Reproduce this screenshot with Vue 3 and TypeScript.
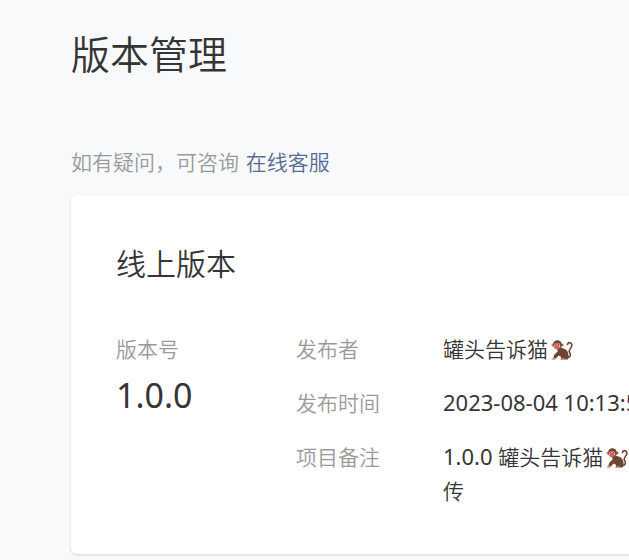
<script setup lang="ts">
import { defineComponent, h } from 'vue'

const MonkeyIcon = defineComponent({
  name: 'MonkeyIcon',
  setup: () => () =>
    h('svg', { viewBox: '0 0 22 22', width: 22, height: 22, role: 'img', 'aria-label': '🐒' }, [
      h('path', {
        d: 'M15.5 18.6C19.5 18.6 20.4 15.6 18.6 13.4C16.8 11.2 20.6 9.6 20.8 6.2C20.8 3.2 17.4 2.8 16.4 5.4',
        fill: 'none', stroke: '#6d4534', 'stroke-width': 1.6, 'stroke-linecap': 'round',
      }),
      h('path', {
        d: 'M6 8.5C10.5 8.2 15.6 9.6 17 13.4C18 16.2 17.6 19 16.6 20.5H9.6L10.2 18L7.6 16.6L4.6 19.8H2L3.4 15.4L6.6 12.4Z',
        fill: '#6d4534',
      }),
      h('circle', { cx: 1.9, cy: 6, r: 1.5, fill: '#c98069' }),
      h('circle', { cx: 11, cy: 6, r: 1.5, fill: '#a8644e' }),
      h('ellipse', { cx: 6.4, cy: 5.8, rx: 4.4, ry: 4.6, fill: '#6d4534' }),
      h('path', { d: 'M2.8 6C3 3.9 5.3 3.8 6.1 4.7C7 3.8 9.2 4.1 9.3 6.2C9.6 8.6 8 9.8 6.1 9.8C4.1 9.8 2.5 8.2 2.8 6Z', fill: '#dc9880' }),
      h('ellipse', { cx: 6, cy: 7.4, rx: 2, ry: 1.5, fill: '#e6487a' }),
      h('circle', { cx: 4.6, cy: 5.4, r: 0.5, fill: '#5a352a' }),
      h('circle', { cx: 7.6, cy: 5.4, r: 0.5, fill: '#5a352a' }),
      h('path', { d: 'M0.6 20.8C0.8 18.6 3 18.2 5 19.2L4.4 20.8ZM9.4 20.8C9.8 19 12 18.8 13.8 19.6V20.8Z', fill: '#e58f75' }),
    ]),
})

const version = '1.0.0'
const publisher = '罐头告诉猫'
const publishedAt = '2023-08-04 10:13:5'
</script>

<template>
  <main class="page">
    <h1 class="title">版本管理</h1>
    <p class="hint">如有疑问，可咨询 <a class="link" href="#">在线客服</a></p>
    <section class="card">
      <h2 class="heading">线上版本</h2>
      <div class="content">
        <div class="version">
          <div class="label">版本号</div>
          <div class="number">{{ version }}</div>
        </div>
        <dl class="details">
          <dt class="label">发布者</dt>
          <dd class="value">{{ publisher }}<MonkeyIcon class="monkey" /></dd>
          <dt class="label">发布时间</dt>
          <dd class="value"><span class="latin">{{ publishedAt }}</span></dd>
          <dt class="label">项目备注</dt>
          <dd class="value"><span class="latin">{{ `${version} ` }}</span>{{ publisher }}<MonkeyIcon class="monkey" /><br />传</dd>
        </dl>
      </div>
    </section>
  </main>
</template>

<style>
body {
  margin: 0;
  background: #f8f9fb;
}
</style>

<style scoped>
.page {
  padding: 22px 0 6px 71px;
  overflow: hidden;
  font-family: "Noto Sans CJK SC", sans-serif;
  font-size: 21px;
  font-weight: 350;
  line-height: 34px;
  color: #353535;
}
.title {
  margin: 0;
  font-size: 39px;
  font-weight: 350;
  line-height: 60px;
}
.hint {
  margin: 62px 0 17px;
  color: #9a9a9a;
}
.link {
  margin-left: 2px;
  color: #576b95;
  text-decoration: none;
}
.card {
  margin-right: -24px;
  padding: 42px 0 47px 45px;
  border-radius: 6px;
  background: #fff;
  box-shadow: 0 1px 3px rgba(0, 0, 0, 0.14);
}
.heading {
  margin: 0 0 44px;
  font-size: 30px;
  font-weight: 350;
  line-height: 50px;
}
.content {
  display: grid;
  grid-template-columns: 180px 1fr;
}
.label {
  color: #9a9a9a;
}
.number {
  font-family: "Noto Sans", sans-serif;
  font-size: 34px;
  font-weight: 400;
  line-height: 60px;
}
.details {
  display: grid;
  grid-template-columns: 147px 1fr;
  row-gap: 20px;
  margin: 0;
}
.value {
  margin: 0;
  white-space: nowrap;
}
.latin {
  font-family: "Noto Sans", sans-serif;
  font-size: 22px;
  font-weight: 400;
  line-height: 20px;
  white-space: pre;
}
.monkey {
  margin-left: 3px;
  vertical-align: -4px;
}
</style>
